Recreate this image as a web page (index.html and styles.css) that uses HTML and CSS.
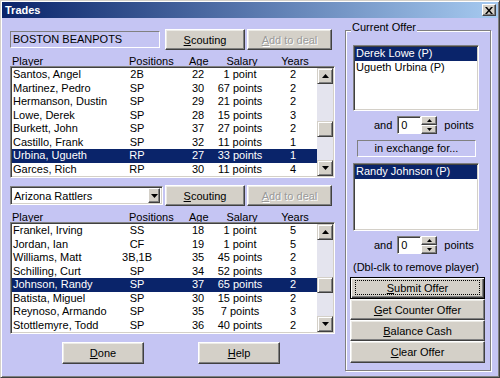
FILE: index.html
```html
<!DOCTYPE html>
<html>
<head>
<meta charset="utf-8">
<title>Trades</title>
<link rel="stylesheet" href="styles.css">
</head>
<body>
<div class="window">
  <div class="titlebar">
    <span class="title">Trades</span>
    <span class="close"><svg width="8" height="7" viewBox="0 0 8 7"><path d="M0 0h2l2 2.4L6 0h2L5 3.5 8 7H6L4 4.6 2 7H0l3-3.5z" fill="#000"/></svg></span>
  </div>
  <div class="main">
    <div class="left">
      <div class="toolrow">
        <div class="teamname">BOSTON BEANPOTS</div>
        <button class="btn scout"><u>S</u>couting</button>
        <button class="btn add disabled"><u>A</u>dd to deal</button>
      </div>
      <div class="colhead">
        <span class="h-player">Player</span><span>Positions</span><span>Age</span><span class="c">Salary</span><span class="c">Years</span>
      </div>
      <div class="list">
        <div class="rows">
          <div class="row"><span class="name">Santos, Angel</span><span class="c">2B</span><span></span><span class="c">22</span><span class="c">1 point</span><span class="c">2</span></div>
          <div class="row"><span class="name">Martinez, Pedro</span><span class="c">SP</span><span></span><span class="c">30</span><span class="c">67 points</span><span class="c">2</span></div>
          <div class="row"><span class="name">Hermanson, Dustin</span><span class="c">SP</span><span></span><span class="c">29</span><span class="c">21 points</span><span class="c">2</span></div>
          <div class="row"><span class="name">Lowe, Derek</span><span class="c">SP</span><span></span><span class="c">28</span><span class="c">15 points</span><span class="c">3</span></div>
          <div class="row"><span class="name">Burkett, John</span><span class="c">SP</span><span></span><span class="c">37</span><span class="c">27 points</span><span class="c">2</span></div>
          <div class="row"><span class="name">Castillo, Frank</span><span class="c">SP</span><span></span><span class="c">32</span><span class="c">11 points</span><span class="c">1</span></div>
          <div class="row sel"><span class="name">Urbina, Ugueth</span><span class="c">RP</span><span></span><span class="c">27</span><span class="c">33 points</span><span class="c">1</span></div>
          <div class="row"><span class="name">Garces, Rich</span><span class="c">RP</span><span></span><span class="c">30</span><span class="c">11 points</span><span class="c">4</span></div>
        </div>
        <div class="sb">
          <div class="sbb"><svg width="7" height="4" viewBox="0 0 7 4"><path d="M3.5 0L7 4H0z" fill="#000"/></svg></div>
          <div class="sbb thumb"></div>
          <div class="sbb down"><svg width="7" height="4" viewBox="0 0 7 4"><path d="M0 0h7L3.5 4z" fill="#000"/></svg></div>
        </div>
      </div>

      <div class="toolrow second">
        <div class="combo"><span class="combo-text">Arizona Rattlers</span><span class="combo-btn"><svg width="7" height="4" viewBox="0 0 7 4"><path d="M0 0h7L3.5 4z" fill="#000"/></svg></span></div>
        <button class="btn scout"><u>S</u>couting</button>
        <button class="btn add disabled"><u>A</u>dd to deal</button>
      </div>
      <div class="colhead">
        <span class="h-player">Player</span><span>Positions</span><span>Age</span><span class="c">Salary</span><span class="c">Years</span>
      </div>
      <div class="list">
        <div class="rows">
          <div class="row"><span class="name">Frankel, Irving</span><span class="c">SS</span><span></span><span class="c">18</span><span class="c">1 point</span><span class="c">5</span></div>
          <div class="row"><span class="name">Jordan, Ian</span><span class="c">CF</span><span></span><span class="c">19</span><span class="c">1 point</span><span class="c">5</span></div>
          <div class="row"><span class="name">Williams, Matt</span><span class="c">3B,1B</span><span></span><span class="c">35</span><span class="c">45 points</span><span class="c">2</span></div>
          <div class="row"><span class="name">Schilling, Curt</span><span class="c">SP</span><span></span><span class="c">34</span><span class="c">52 points</span><span class="c">3</span></div>
          <div class="row sel"><span class="name">Johnson, Randy</span><span class="c">SP</span><span></span><span class="c">37</span><span class="c">65 points</span><span class="c">2</span></div>
          <div class="row"><span class="name">Batista, Miguel</span><span class="c">SP</span><span></span><span class="c">30</span><span class="c">15 points</span><span class="c">2</span></div>
          <div class="row"><span class="name">Reynoso, Armando</span><span class="c">SP</span><span></span><span class="c">35</span><span class="c">7 points</span><span class="c">3</span></div>
          <div class="row"><span class="name">Stottlemyre, Todd</span><span class="c">SP</span><span></span><span class="c">36</span><span class="c">40 points</span><span class="c">2</span></div>
        </div>
        <div class="sb">
          <div class="sbb"><svg width="7" height="4" viewBox="0 0 7 4"><path d="M3.5 0L7 4H0z" fill="#000"/></svg></div>
          <div class="sbb thumb"></div>
          <div class="sbb down"><svg width="7" height="4" viewBox="0 0 7 4"><path d="M0 0h7L3.5 4z" fill="#000"/></svg></div>
        </div>
      </div>

      <div class="bottomrow">
        <button class="btn big"><u>D</u>one</button>
        <button class="btn big"><u>H</u>elp</button>
      </div>
    </div>

    <div class="group">
      <span class="group-label">Current Offer</span>
      <div class="olist">
        <div class="orow sel">Derek Lowe (P)</div>
        <div class="orow">Ugueth Urbina (P)</div>
      </div>
      <div class="spinrow">
        <span>and</span>
        <div class="spinbox">
          <div class="spinin">0</div>
          <div class="spinbtns">
            <div class="sbtn"><svg width="5" height="3" viewBox="0 0 5 3"><path d="M2.5 0L5 3H0z" fill="#000"/></svg></div>
            <div class="sbtn"><svg width="5" height="3" viewBox="0 0 5 3"><path d="M0 0h5L2.5 3z" fill="#000"/></svg></div>
          </div>
        </div>
        <span class="pts">points</span>
      </div>
      <div class="exch">in exchange for...</div>
      <div class="olist tall">
        <div class="orow sel">Randy Johnson (P)</div>
      </div>
      <div class="spinrow">
        <span>and</span>
        <div class="spinbox">
          <div class="spinin">0</div>
          <div class="spinbtns">
            <div class="sbtn"><svg width="5" height="3" viewBox="0 0 5 3"><path d="M2.5 0L5 3H0z" fill="#000"/></svg></div>
            <div class="sbtn"><svg width="5" height="3" viewBox="0 0 5 3"><path d="M0 0h5L2.5 3z" fill="#000"/></svg></div>
          </div>
        </div>
        <span class="pts">points</span>
      </div>
      <div class="hint">(Dbl-clk to remove player)</div>
      <div class="obtns">
        <button class="btn obtn default"><span class="focus"><u>S</u>ubmit Offer</span></button>
        <button class="btn obtn"><u>G</u>et Counter Offer</button>
        <button class="btn obtn"><u>B</u>alance Cash</button>
        <button class="btn obtn last"><u>C</u>lear Offer</button>
      </div>
    </div>
  </div>
</div>
</body>
</html>
```

FILE: styles.css
```css
* { box-sizing: border-box; }
html, body { margin: 0; padding: 0; }
body {
  font-family: "Liberation Sans", Arial, sans-serif;
  font-size: 11px;
  color: #000;
  background: #c5c5f3;
}
u { text-decoration: underline; text-underline-offset: 1px; }

.window {
  width: 500px;
  height: 378px;
  background: #c5c5f3;
  border: 1px solid;
  border-color: #d4d0c8 #404040 #404040 #d4d0c8;
  box-shadow: inset 1px 1px #fff, inset -1px -1px #808080;
  padding: 1px;
  display: flex;
  flex-direction: column;
}

.titlebar {
  height: 16px;
  flex: none;
  background: linear-gradient(to right, #0a246a, #a6caf0);
  display: flex;
  align-items: center;
  justify-content: space-between;
  padding: 0 2px 0 3px;
}
.title { color: #fff; font-weight: bold; font-size: 11px; }
.close {
  width: 14px;
  height: 12px;
  background: #d4d0c8;
  border: 1px solid;
  border-color: #fff #404040 #404040 #fff;
  box-shadow: inset -1px -1px #808080;
  display: flex;
  align-items: center;
  justify-content: center;
}

.main {
  display: flex;
  gap: 10px;
  padding-left: 8px;
  flex: 1;
}

.left {
  width: 325px;
  padding-top: 11px;
  display: flex;
  flex-direction: column;
}

.toolrow {
  display: flex;
  align-items: center;
  height: 21px;
  flex: none;
}
.toolrow.second { margin-top: 7px; }

.teamname {
  width: 150px;
  height: 17px;
  margin-right: 5px;
  border: 1px solid;
  border-color: #808080 #fff #fff #808080;
  padding-left: 2px;
  line-height: 15px;
  white-space: nowrap;
}

.btn {
  font: inherit;
  color: #000;
  background: #d4d0c8;
  height: 21px;
  border: 1px solid;
  border-color: #fff #404040 #404040 #fff;
  box-shadow: inset -1px -1px #808080, inset 1px 1px #ecebe6;
  padding: 0;
  margin: 0;
  display: flex;
  align-items: center;
  justify-content: center;
  white-space: nowrap;
  flex: none;
}
.scout { width: 80px; margin-right: 2px; }
.add { width: 85px; }
.disabled { color: #9a9a9a; text-shadow: 1px 1px #fff; }

.combo {
  width: 153px;
  height: 19px;
  margin-right: 2px;
  background: #fff;
  border: 1px solid;
  border-color: #808080 #fff #fff #808080;
  box-shadow: inset 1px 1px #404040, inset -1px -1px #d4d0c8;
  padding: 2px;
  display: flex;
  align-items: center;
}
.combo-text { flex: 1; padding-left: 1px; }
.combo-btn {
  width: 12px;
  height: 15px;
  background: #d4d0c8;
  border: 1px solid;
  border-color: #fff #404040 #404040 #fff;
  box-shadow: inset -1px -1px #808080;
  display: flex;
  align-items: center;
  justify-content: center;
}

.colhead {
  display: grid;
  grid-template-columns: 119px 60px 24px 58px 48px;
  height: 16px;
  padding-top: 6px;
  line-height: 10px;
  flex: none;
  white-space: nowrap;
}
.h-player { padding-left: 2px; }
.c { text-align: center; }

.list {
  height: 112px;
  flex: none;
  display: flex;
  background: #fff;
  border: 1px solid;
  border-color: #808080 #fff #fff #808080;
  box-shadow: inset 1px 1px #404040, inset -1px -1px #d4d0c8;
  padding: 1px;
}
.rows { flex: 1; }
.row {
  display: grid;
  grid-template-columns: 100px 50px 24px 24px 60px 46px;
  height: 13.5px;
  line-height: 13.5px;
  white-space: nowrap;
}
.row .name { padding-left: 1px; }
.sel { background: #0a246a; color: #fff; }

.sb {
  width: 16px;
  background: #e4e4ee;
  display: flex;
  flex-direction: column;
}
.sbb {
  width: 16px;
  height: 16px;
  flex: none;
  background: #d4d0c8;
  border: 1px solid;
  border-color: #d4d0c8 #404040 #404040 #d4d0c8;
  box-shadow: inset 1px 1px #fff, inset -1px -1px #808080;
  display: flex;
  align-items: center;
  justify-content: center;
}
.thumb { margin-top: 37px; }
.down { margin-top: auto; }

.bottomrow {
  display: flex;
  gap: 54px;
  padding-left: 52px;
  margin-top: 8px;
}
.big { width: 82px; height: 22px; }

.group {
  position: relative;
  width: 146px;
  height: 341px;
  margin-top: 12px;
  border: 1px solid #808080;
  box-shadow: inset 1px 1px #fff, 1px 1px #fff;
  padding-top: 14px;
  display: flex;
  flex-direction: column;
  flex: none;
}
.group-label {
  position: absolute;
  top: -10px;
  left: 5px;
  padding: 0 1px;
  background: #c5c5f3;
  line-height: 13px;
}

.olist {
  width: 126px;
  height: 66px;
  margin-left: 7px;
  flex: none;
  background: #fff;
  border: 1px solid;
  border-color: #808080 #fff #fff #808080;
  box-shadow: inset 1px 1px #404040, inset -1px -1px #d4d0c8;
  padding: 1px;
}
.olist.tall { height: 68px; margin-top: 6px; }
.orow { height: 13.5px; line-height: 13.5px; padding-left: 1px; white-space: nowrap; }

.spinrow {
  display: flex;
  align-items: center;
  height: 18px;
  margin-top: 5px;
  padding-left: 28px;
  flex: none;
}
.spinbox { display: flex; height: 18px; margin-left: 5px; }
.spinin {
  width: 24px;
  background: #fff;
  border: 1px solid;
  border-color: #808080 #fff #fff #808080;
  box-shadow: inset 1px 1px #404040;
  padding-left: 3px;
  line-height: 16px;
}
.spinbtns { width: 16px; display: flex; flex-direction: column; }
.sbtn {
  flex: 1;
  background: #d4d0c8;
  border: 1px solid;
  border-color: #fff #404040 #404040 #fff;
  box-shadow: inset -1px -1px #808080;
  display: flex;
  align-items: center;
  justify-content: center;
}
.pts { margin-left: 7px; }

.exch {
  margin: 6px 0 0 11px;
  width: 119px;
  height: 17px;
  flex: none;
  border: 1px solid;
  border-color: #808080 #fff #fff #808080;
  text-align: center;
  line-height: 15px;
}

.hint {
  margin-top: 7px;
  line-height: 13px;
  padding-left: 7px;
  white-space: nowrap;
}

.obtns { margin-top: 3px; margin-left: 4px; display: flex; flex-direction: column; }
.obtn { width: 135px; height: 21px; }
.default {
  height: 22px;
  border: 1px solid #000;
  box-shadow: inset 1px 1px #fff, inset -1px -1px #404040, inset -2px -2px #808080;
  padding: 2px 4px 3px 4px;
  align-items: stretch;
}
.focus {
  flex: 1;
  border: 1px dotted #000;
  display: flex;
  align-items: center;
  justify-content: center;
}
.obtn.last { height: 22px; }
```
